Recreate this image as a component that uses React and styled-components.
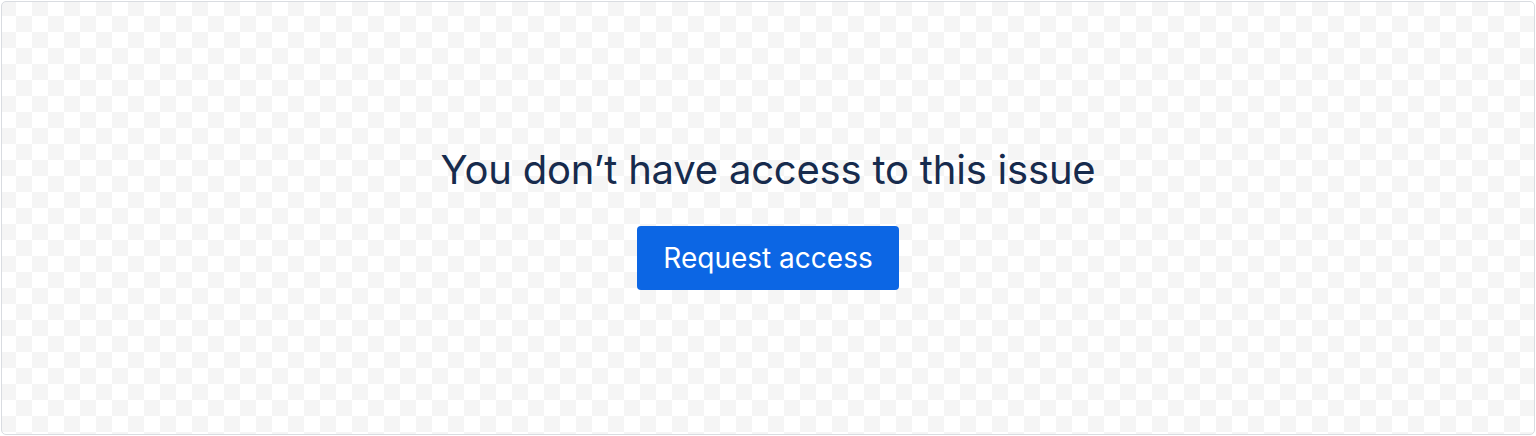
import React from "react";
import styled, { createGlobalStyle } from "styled-components";

const GlobalStyle = createGlobalStyle`
  html, body {
    margin: 0;
    padding: 0;
    background: #fff;
  }
  body {
    font-family: Inter, "Noto Sans", sans-serif;
  }
`;

const Page = styled.div`
  width: 1536px;
  height: 436px;
  padding: 1px;
  box-sizing: border-box;
  background: #fff;
`;

const Panel = styled.div`
  height: 100%;
  box-sizing: border-box;
  border: 1px solid #d9dce1;
  border-radius: 5px;
  background: repeating-conic-gradient(#ffffff 0 25%, #f5f5f5 0 50%) -2px -2px / 32px 32px;
  display: flex;
  flex-direction: column;
  align-items: center;
  justify-content: center;
  gap: 32px;
`;

const Title = styled.h1`
  margin: 0;
  font-size: 40px;
  font-weight: 400;
  line-height: 48px;
  letter-spacing: -0.2px;
  color: #172b4d;
`;

const Button = styled.button`
  height: 64px;
  padding: 0 26px;
  border: none;
  border-radius: 4px;
  background: #0c66e4;
  color: #fff;
  font-family: inherit;
  font-size: 28px;
  font-weight: 400;
  cursor: pointer;
`;

export default function App() {
  return (
    <Page>
      <GlobalStyle />
      <Panel>
        <Title>You don’t have access to this issue</Title>
        <Button>Request access</Button>
      </Panel>
    </Page>
  );
}
